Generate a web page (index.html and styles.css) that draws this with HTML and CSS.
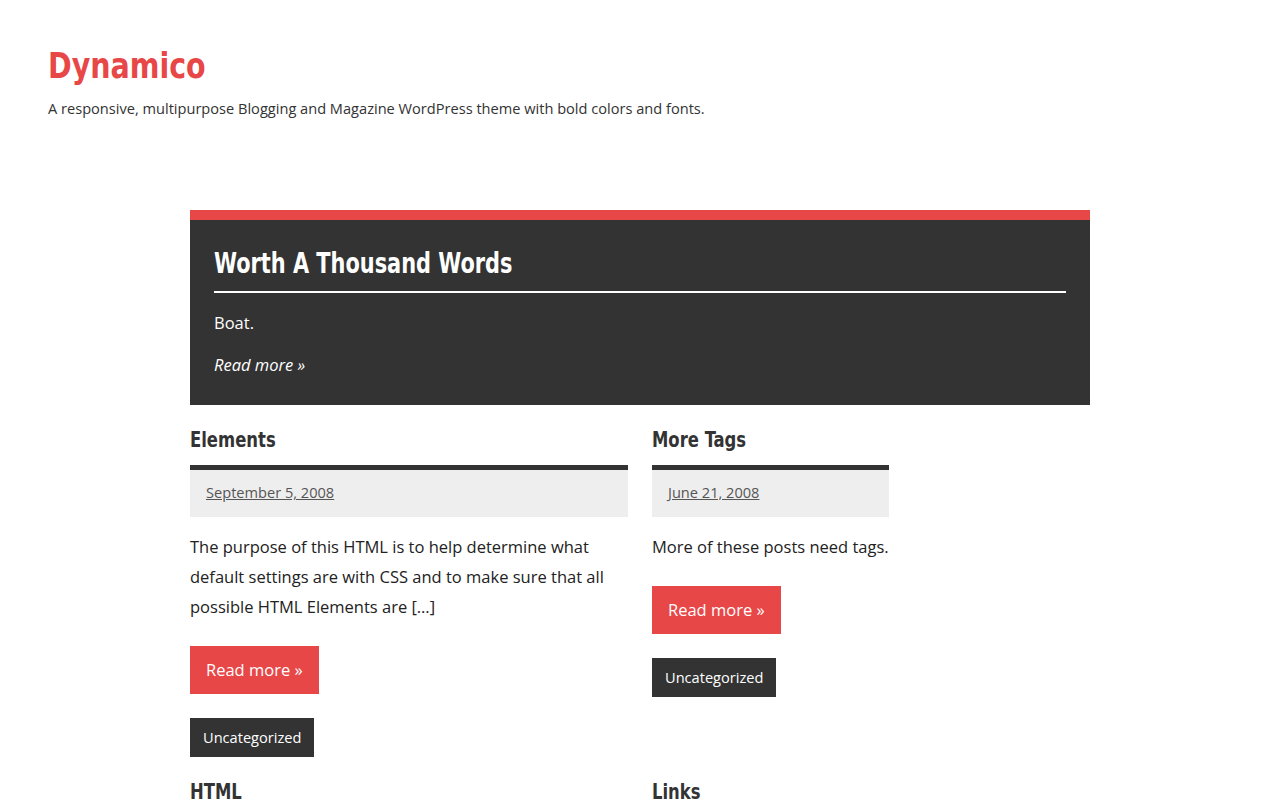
FILE: index.html
```html
<!DOCTYPE html>
<html lang="en">
<head>
    <meta charset="UTF-8">
    <title>Dynamico</title>
    <link rel="stylesheet" href="styles.css">
</head>
<body>

<header class="site-header">
    <h1 class="site-title"><a href="#">Dynamico</a></h1>
    <p class="site-description">A responsive, multipurpose Blogging and Magazine WordPress theme with bold colors and fonts.</p>
</header>

<main class="content">
    <article class="featured-post">
        <h2 class="featured-title"><a href="#">Worth A Thousand Words</a></h2>
        <p>Boat.</p>
        <a href="#" class="featured-more">Read more &raquo;</a>
    </article>

    <div class="post-grid">
        <article class="post">
            <h2 class="post-title"><a href="#">Elements</a></h2>
            <div class="post-meta"><a href="#">September 5, 2008</a></div>
            <p class="post-excerpt">The purpose of this HTML is to help determine what default settings are with CSS and to make sure that all possible HTML Elements are [&hellip;]</p>
            <a href="#" class="more-link">Read more &raquo;</a>
            <div class="post-categories"><a href="#">Uncategorized</a></div>
        </article>

        <article class="post">
            <h2 class="post-title"><a href="#">More Tags</a></h2>
            <div class="post-meta"><a href="#">June 21, 2008</a></div>
            <p class="post-excerpt">More of these posts need tags.</p>
            <a href="#" class="more-link">Read more &raquo;</a>
            <div class="post-categories"><a href="#">Uncategorized</a></div>
        </article>

        <article class="post">
            <h2 class="post-title"><a href="#">HTML</a></h2>
        </article>

        <article class="post">
            <h2 class="post-title"><a href="#">Links</a></h2>
        </article>
    </div>
</main>

</body>
</html>
```

FILE: styles.css
```css
body {
    margin: 0;
    font-family: 'Open Sans', 'Noto Sans', sans-serif;
    font-size: 16.5px;
    color: #222;
    background: #fff;
}

a {
    color: inherit;
    text-decoration: none;
}

/* headings use a condensed bold face, squeezed a bit further */
.site-title a,
.featured-title a,
.post-title a {
    display: inline-block;
    transform-origin: left center;
}

.site-header {
    padding: 40px 48px 0;
}

.site-title {
    margin: 0;
    font-family: 'DejaVu Sans Condensed', sans-serif;
    font-size: 36px;
    line-height: 52px;
    font-weight: bold;
    color: #e84747;
}

.site-title a {
    transform: scaleX(0.88);
}

.site-description {
    margin: 5px 0 0;
    font-size: 14.6px;
    line-height: 22px;
    color: #333;
}

.content {
    width: 900px;
    margin: 91px auto 0;
}

.featured-post {
    background: #333;
    border-top: 10px solid #e84747;
    padding: 20px 24px 27px;
    color: #fff;
}

.featured-title {
    margin: 0;
    padding-bottom: 5px;
    border-bottom: 2px solid #fff;
    font-family: 'DejaVu Sans Condensed', sans-serif;
    font-size: 29px;
    line-height: 46px;
    font-weight: bold;
}

.featured-title a {
    transform: scaleX(0.8);
}

.featured-post p {
    margin: 17px 0 0;
    line-height: 26px;
}

.featured-more {
    display: inline-block;
    margin-top: 16px;
    font-style: italic;
    line-height: 26px;
}

.post-grid {
    display: grid;
    grid-template-columns: 438px 438px;
    column-gap: 24px;
    row-gap: 19px;
    justify-items: start;
    margin-top: 19px;
}

.post {
    max-width: 438px;
}

.post-title {
    margin: 0 0 9px;
    font-family: 'DejaVu Sans Condensed', sans-serif;
    font-size: 21.5px;
    line-height: 32px;
    font-weight: bold;
    color: #333;
}

.post-title a {
    transform: scaleX(0.85);
}

.post-meta {
    background: #eee;
    border-top: 5px solid #333;
    padding: 11px 16px 13px;
    font-size: 14.6px;
    line-height: 23px;
}

.post-meta a {
    color: #555;
    text-decoration: underline;
}

.post-excerpt {
    margin: 15px 0 0;
    line-height: 30px;
}

.more-link {
    display: inline-block;
    margin-top: 24px;
    padding: 11px 16px;
    background: #e84747;
    color: #fff;
    line-height: 26px;
}

.post-categories {
    margin-top: 24px;
}

.post-categories a {
    display: inline-block;
    padding: 9px 13px;
    background: #333;
    color: #fff;
    font-size: 14.6px;
    line-height: 21px;
}
```
